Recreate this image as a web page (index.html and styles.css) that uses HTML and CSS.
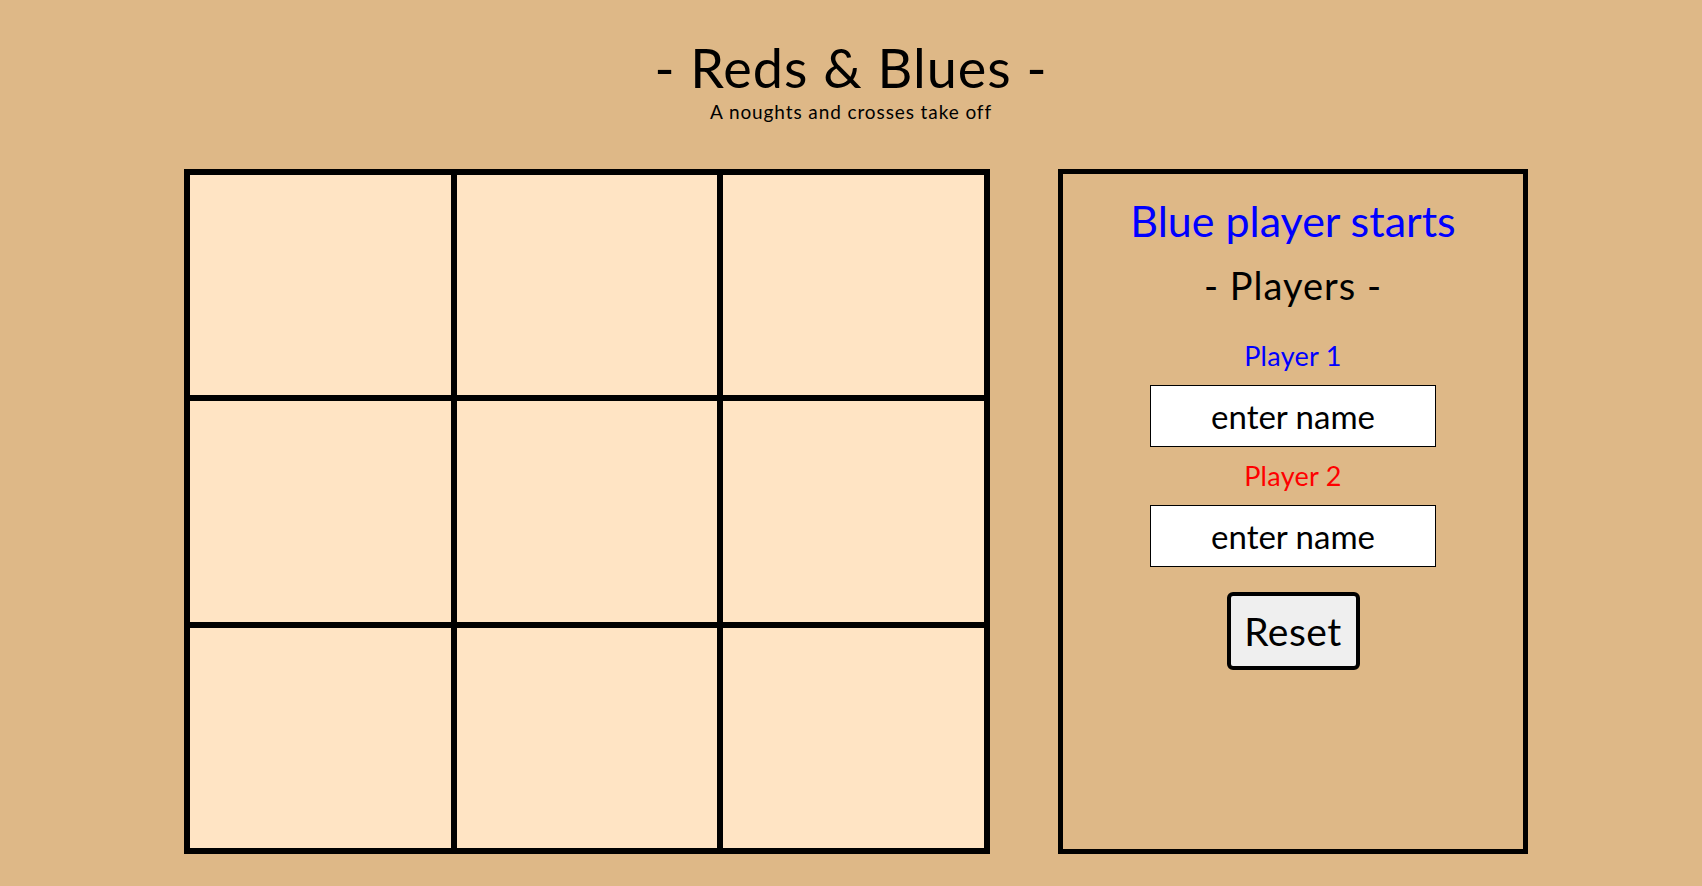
FILE: index.html
```html
<!DOCTYPE html>
<html lang="en">
<head>
<meta charset="utf-8">
<title>Reds &amp; Blues</title>
<link rel="stylesheet" href="styles.css">
</head>
<body>
  <header class="header">
    <h1 class="title">- Reds &amp; Blues -</h1>
    <p class="subtitle">A noughts and crosses take off</p>
  </header>
  <main class="main">
    <div class="board">
      <div class="cell"></div>
      <div class="cell"></div>
      <div class="cell"></div>
      <div class="cell"></div>
      <div class="cell"></div>
      <div class="cell"></div>
      <div class="cell"></div>
      <div class="cell"></div>
      <div class="cell"></div>
    </div>
    <aside class="panel">
      <h2 class="status">Blue player starts</h2>
      <h3 class="players-title">- Players -</h3>
      <label class="player-label player-blue" for="p1">Player 1</label>
      <input class="name-input" id="p1" type="text" placeholder="enter name">
      <label class="player-label player-red" for="p2">Player 2</label>
      <input class="name-input" id="p2" type="text" placeholder="enter name">
      <button class="reset" type="button">Reset</button>
    </aside>
  </main>
</body>
</html>
```

FILE: styles.css
```css
* { box-sizing: border-box; }

html, body {
  margin: 0;
  padding: 0;
}

body {
  background: #deb887;
  font-family: "Lato", "Open Sans", sans-serif;
  color: #000;
  height: 886px;
  overflow: hidden;
}

.header {
  text-align: center;
  padding-top: 41px;
}

.title {
  margin: 0;
  font-size: 54px;
  line-height: 54px;
  font-weight: 400;
  letter-spacing: 1px;
}

.subtitle {
  margin: 7px 0 0;
  font-size: 19px;
  line-height: 19px;
  font-weight: 400;
  letter-spacing: 0.9px;
}

.main {
  display: flex;
  justify-content: center;
  gap: 68px;
  margin-top: 48px;
  padding-left: 10px;
}

.board {
  width: 806px;
  height: 685px;
  border: 3px solid #000;
  display: grid;
  grid-template-columns: repeat(3, 1fr);
  grid-template-rows: repeat(3, 1fr);
}

.cell {
  background: #ffe4c4;
  border: 3px solid #000;
}

.panel {
  width: 470px;
  height: 685px;
  border: 5px solid #000;
  display: flex;
  flex-direction: column;
  align-items: center;
  padding-top: 25px;
}

.status {
  margin: 0;
  font-size: 43px;
  line-height: 43px;
  font-weight: 400;
  color: #0000ff;
}

.players-title {
  margin: 24px 0 0;
  font-size: 38px;
  line-height: 38px;
  font-weight: 400;
  letter-spacing: 1px;
}

.player-label {
  display: block;
  font-size: 27px;
  line-height: 27px;
  margin-top: 38px;
  letter-spacing: 0.3px;
}

.player-blue { color: #0000ff; }

.player-red {
  color: #ff0000;
  margin-top: 15px;
}

.name-input {
  display: block;
  width: 286px;
  height: 62px;
  margin-top: 16px;
  border: 1px solid #000;
  border-radius: 0;
  background: #fff;
  font-family: inherit;
  font-size: 33px;
  text-align: center;
  padding: 0;
  outline: none;
}

.name-input::placeholder {
  color: #000;
  opacity: 1;
}

.reset {
  width: 133px;
  height: 78px;
  margin-top: 25px;
  border: 4px solid #000;
  border-radius: 6px;
  background: #efefef;
  font-family: inherit;
  font-size: 39px;
  letter-spacing: 0.5px;
  color: #000;
  padding: 0;
}
```
